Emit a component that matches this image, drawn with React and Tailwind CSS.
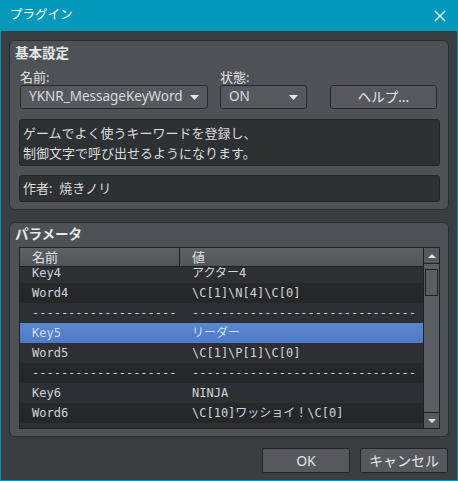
import React from "react";

const ui = { fontFamily: '"Noto Sans", "Noto Sans CJK JP", sans-serif' };
const mono = { fontFamily: '"DejaVu Sans Mono", "Noto Sans CJK JP", monospace' };

const rows = [
  { k: "Key4", v: "アクター4" },
  { k: "Word4", v: "\\C[1]\\N[4]\\C[0]" },
  { k: "-".repeat(20), v: "-".repeat(31) },
  { k: "Key5", v: "リーダー", sel: true },
  { k: "Word5", v: "\\C[1]\\P[1]\\C[0]" },
  { k: "-".repeat(20), v: "-".repeat(31) },
  { k: "Key6", v: "NINJA" },
  { k: "Word6", v: "\\C[10]ワッショイ！\\C[0]" },
];

function Arrow() {
  return (
    <svg width="9" height="5" viewBox="0 0 9 5" className="shrink-0">
      <path d="M0 0 L9 0 L4.5 5 Z" fill="#e4e6e8" />
    </svg>
  );
}

function Select({ width, children }) {
  return (
    <div
      className={`${width} h-[24px] flex items-center justify-between pl-[8px] pr-[8px] bg-[#55595d] border border-[#26282b] rounded-[3px] text-[13.5px] text-[#d6dae0]`}
    >
      <span className="leading-none">{children}</span>
      <Arrow />
    </div>
  );
}

export default function App() {
  return (
    <div className="w-[458px] h-[481px] bg-[#0399bb] px-[1px] pb-[1px] flex flex-col" style={ui}>
      {/* タイトルバー */}
      <div className="h-[31px] shrink-0 flex items-center justify-between pl-[9px] pr-[11px] text-white">
        <span className="text-[12.5px] leading-none">プラグイン</span>
        <svg width="12" height="12" viewBox="0 0 12 12">
          <path d="M1 1 L11 11 M11 1 L1 11" stroke="#ffffff" strokeWidth="1.3" />
        </svg>
      </div>

      <div className="flex-1 bg-[#3b3e41] px-[8px] pt-[9px] flex flex-col">
        {/* 基本設定 */}
        <div className="h-[170px] bg-[#4e5256] border border-[#2a2c2f] rounded-[6px] pt-[2px] pl-[9px] pr-[8px] flex flex-col">
          <div className="h-[20px] leading-[20px] -ml-[4px] text-[13.5px] font-bold text-[#e8e8e8]">
            基本設定
          </div>
          <div className="mt-[6px] flex">
            <div className="ml-[1px] flex flex-col">
              <div className="h-[16px] leading-[16px] text-[13px] text-[#e0e0e0]">名前:</div>
              <Select width="w-[188px]">YKNR_MessageKeyWord</Select>
            </div>
            <div className="ml-[12px] flex flex-col">
              <div className="h-[16px] leading-[16px] text-[13px] text-[#e0e0e0]">状態:</div>
              <Select width="w-[87px]">ON</Select>
            </div>
            <div className="ml-[23px] pt-[16px]">
              <div className="w-[107px] h-[24px] flex items-center justify-center bg-[#55595d] border border-[#26282b] rounded-[3px] text-[13.5px] text-[#e4e6e8]">
                ヘルプ...
              </div>
            </div>
          </div>
          <div className="mt-[10px] h-[47px] bg-[#2e3134] border border-[#222427] rounded-[3px] pt-[3px] pl-[3px] text-[13px] leading-[20px] text-[#dcdcdc]">
            <div>ゲームでよく使うキーワードを登録し、</div>
            <div>制御文字で呼び出せるようになります。</div>
          </div>
          <div className="mt-[9px] h-[27px] bg-[#2e3134] border border-[#222427] rounded-[3px] pl-[3px] flex items-center text-[13px] text-[#dcdcdc]">
            作者:&nbsp;&nbsp;焼きノリ
          </div>
        </div>

        {/* パラメータ */}
        <div className="mt-[12px] h-[215px] bg-[#4e5256] border border-[#2a2c2f] rounded-[6px] pt-[1px] pl-[9px] pr-[8px] flex flex-col">
          <div className="h-[20px] leading-[20px] -ml-[4px] text-[13.5px] font-bold text-[#e8e8e8]">
            パラメータ
          </div>
          <div className="mt-[3px] h-[182px] border border-[#1e2022] flex">
            <div className="flex-1 flex flex-col min-w-0">
              <div className="h-[19px] shrink-0 flex bg-gradient-to-b from-[#5d6165] to-[#515559] border-b border-[#1e2022] text-[13px] text-[#e0e0e0]">
                <div className="w-[160px] pl-[12px] border-r border-[#1e2022] leading-[19px]">名前</div>
                <div className="flex-1 pl-[12px] leading-[19px]">値</div>
              </div>
              <div className="flex-1 overflow-hidden bg-[#2c2f33]">
                <div className="-mt-[4px]">
                  {rows.map((r, i) => (
                    <div
                      key={i}
                      className={`h-[20px] flex items-center text-[12px] whitespace-nowrap ${
                        r.sel
                          ? "bg-gradient-to-b from-[#5a86d2] to-[#4f7bc6] text-[#d4def0]"
                          : i % 2 === 0
                          ? "bg-[#2c2f33] text-[#d2d4d6]"
                          : "bg-[#25282b] text-[#d2d4d6]"
                      }`}
                      style={mono}
                    >
                      <div className="w-[160px] pl-[12px]">{r.k}</div>
                      <div className="flex-1 pl-[12px]">{r.v}</div>
                    </div>
                  ))}
                </div>
              </div>
            </div>
            {/* スクロールバー */}
            <div className="w-[16px] shrink-0 bg-[#5a5e62] border-l border-[#1e2022] flex flex-col">
              <div className="h-[16px] flex items-center justify-center border-b border-[#1e2022] bg-[#55595d]">
                <svg width="8" height="4" viewBox="0 0 8 4">
                  <path d="M0 4 L8 4 L4 0 Z" fill="#e4e6e8" />
                </svg>
              </div>
              <div className="mt-[5px] mx-[1px] h-[27px] border border-[#1e2022] bg-[#5a5e62]" />
              <div className="flex-1" />
              <div className="h-[16px] flex items-center justify-center border-t border-[#1e2022] bg-[#55595d]">
                <svg width="8" height="4" viewBox="0 0 8 4">
                  <path d="M0 0 L8 0 L4 4 Z" fill="#e4e6e8" />
                </svg>
              </div>
            </div>
          </div>
        </div>

        {/* ボタン */}
        <div className="mt-[11px] flex justify-end gap-[10px] pr-[1px]">
          <div className="w-[88px] h-[25px] flex items-center justify-center bg-[#55595d] border border-[#222427] rounded-[2px] text-[14px] text-[#e4e6e8]">
            OK
          </div>
          <div className="w-[88px] h-[25px] flex items-center justify-center bg-[#55595d] border border-[#222427] rounded-[2px] text-[14px] text-[#e4e6e8]">
            キャンセル
          </div>
        </div>
      </div>
    </div>
  );
}
